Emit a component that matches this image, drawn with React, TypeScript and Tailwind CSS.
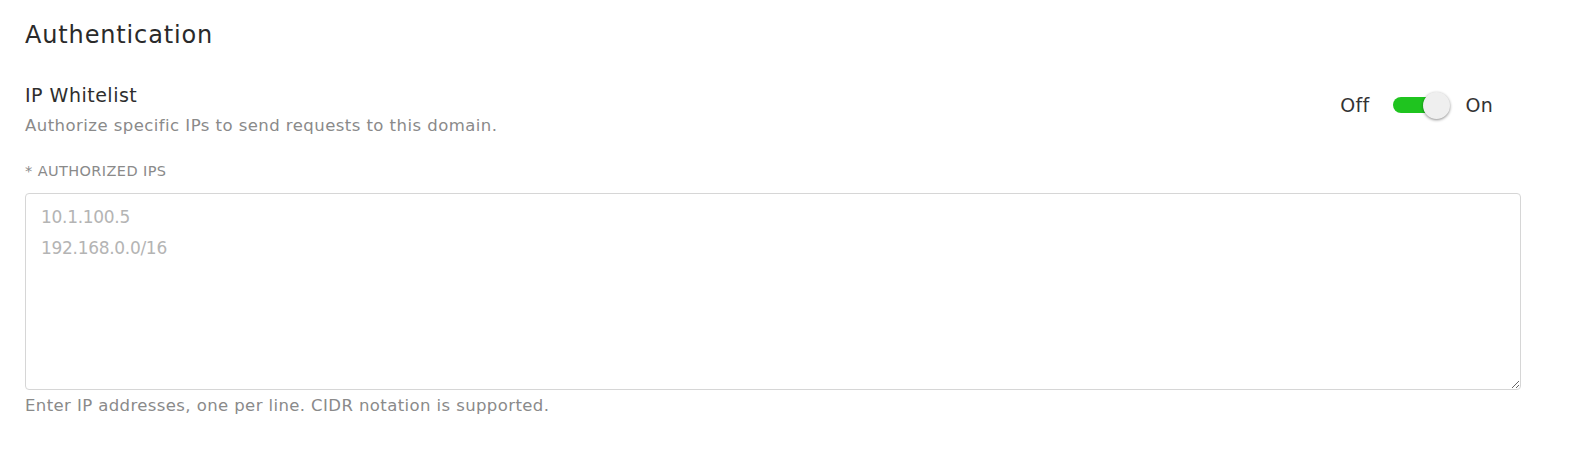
import { useState } from "react";

const font = { fontFamily: '"DejaVu Sans", "Noto Sans", sans-serif' };

const Toggle = ({ on, onChange }: { on: boolean; onChange: (v: boolean) => void }) => {
  return (
    <div className="flex items-center gap-[24px] text-[19px] leading-[28px] text-[#333] tracking-[0.3px]">
      <span>Off</span>
      <button
        type="button"
        onClick={() => onChange(!on)}
        className="relative w-[48px] h-[16px] rounded-full flex items-center"
      >
        <span className={`absolute inset-0 rounded-full ${on ? "bg-[#1fc41f]" : "bg-[#cfcfcf]"}`} />
        <span
          className={`absolute w-[27px] h-[27px] rounded-full bg-[#efefef] shadow-[0_1px_3px_rgba(0,0,0,0.45)] ${
            on ? "left-[30px]" : "left-[-6px]"
          }`}
        />
      </button>
      <span>On</span>
    </div>
  );
};

export default function App() {
  const [enabled, setEnabled] = useState(true);

  return (
    <div className="bg-white w-[1572px] h-[451px] pl-[25px] pr-[51px] pt-[18px]" style={font}>
      <h2 className="text-[24px] leading-[34px] text-[#2a2a2a] tracking-[0.85px]">Authentication</h2>
      <div className="flex justify-between mt-[29px]">
        <div>
          <div className="text-[19px] leading-[28px] text-[#2e2e2e] tracking-[0.5px]">IP Whitelist</div>
          <div className="text-[16.5px] leading-[22px] mt-[6px] text-[#8a8a8a] tracking-[0.45px]">
            Authorize specific IPs to send requests to this domain.
          </div>
        </div>
        <div className="pt-[10px] pr-[28px]">
          <Toggle on={enabled} onChange={setEnabled} />
        </div>
      </div>
      <label className="block mt-[24px] text-[14.5px] leading-[20px] text-[#8a8a8a] tracking-[0.4px]">
        * AUTHORIZED IPS
      </label>
      <textarea
        className="block w-full h-[197px] mt-[12px] border border-[#d6d6d6] rounded-[4px] px-[15px] pt-[8px] pb-[7px] text-[17px] leading-[31px] tracking-[-0.3px] text-[#333] placeholder:text-[#b4b4b4] outline-none"
        placeholder={"10.1.100.5\n192.168.0.0/16"}
        style={font}
      />
      <div className="mt-[5px] text-[16.5px] leading-[22px] text-[#8a8a8a] tracking-[0.4px]">
        Enter IP addresses, one per line. CIDR notation is supported.
      </div>
    </div>
  );
}
